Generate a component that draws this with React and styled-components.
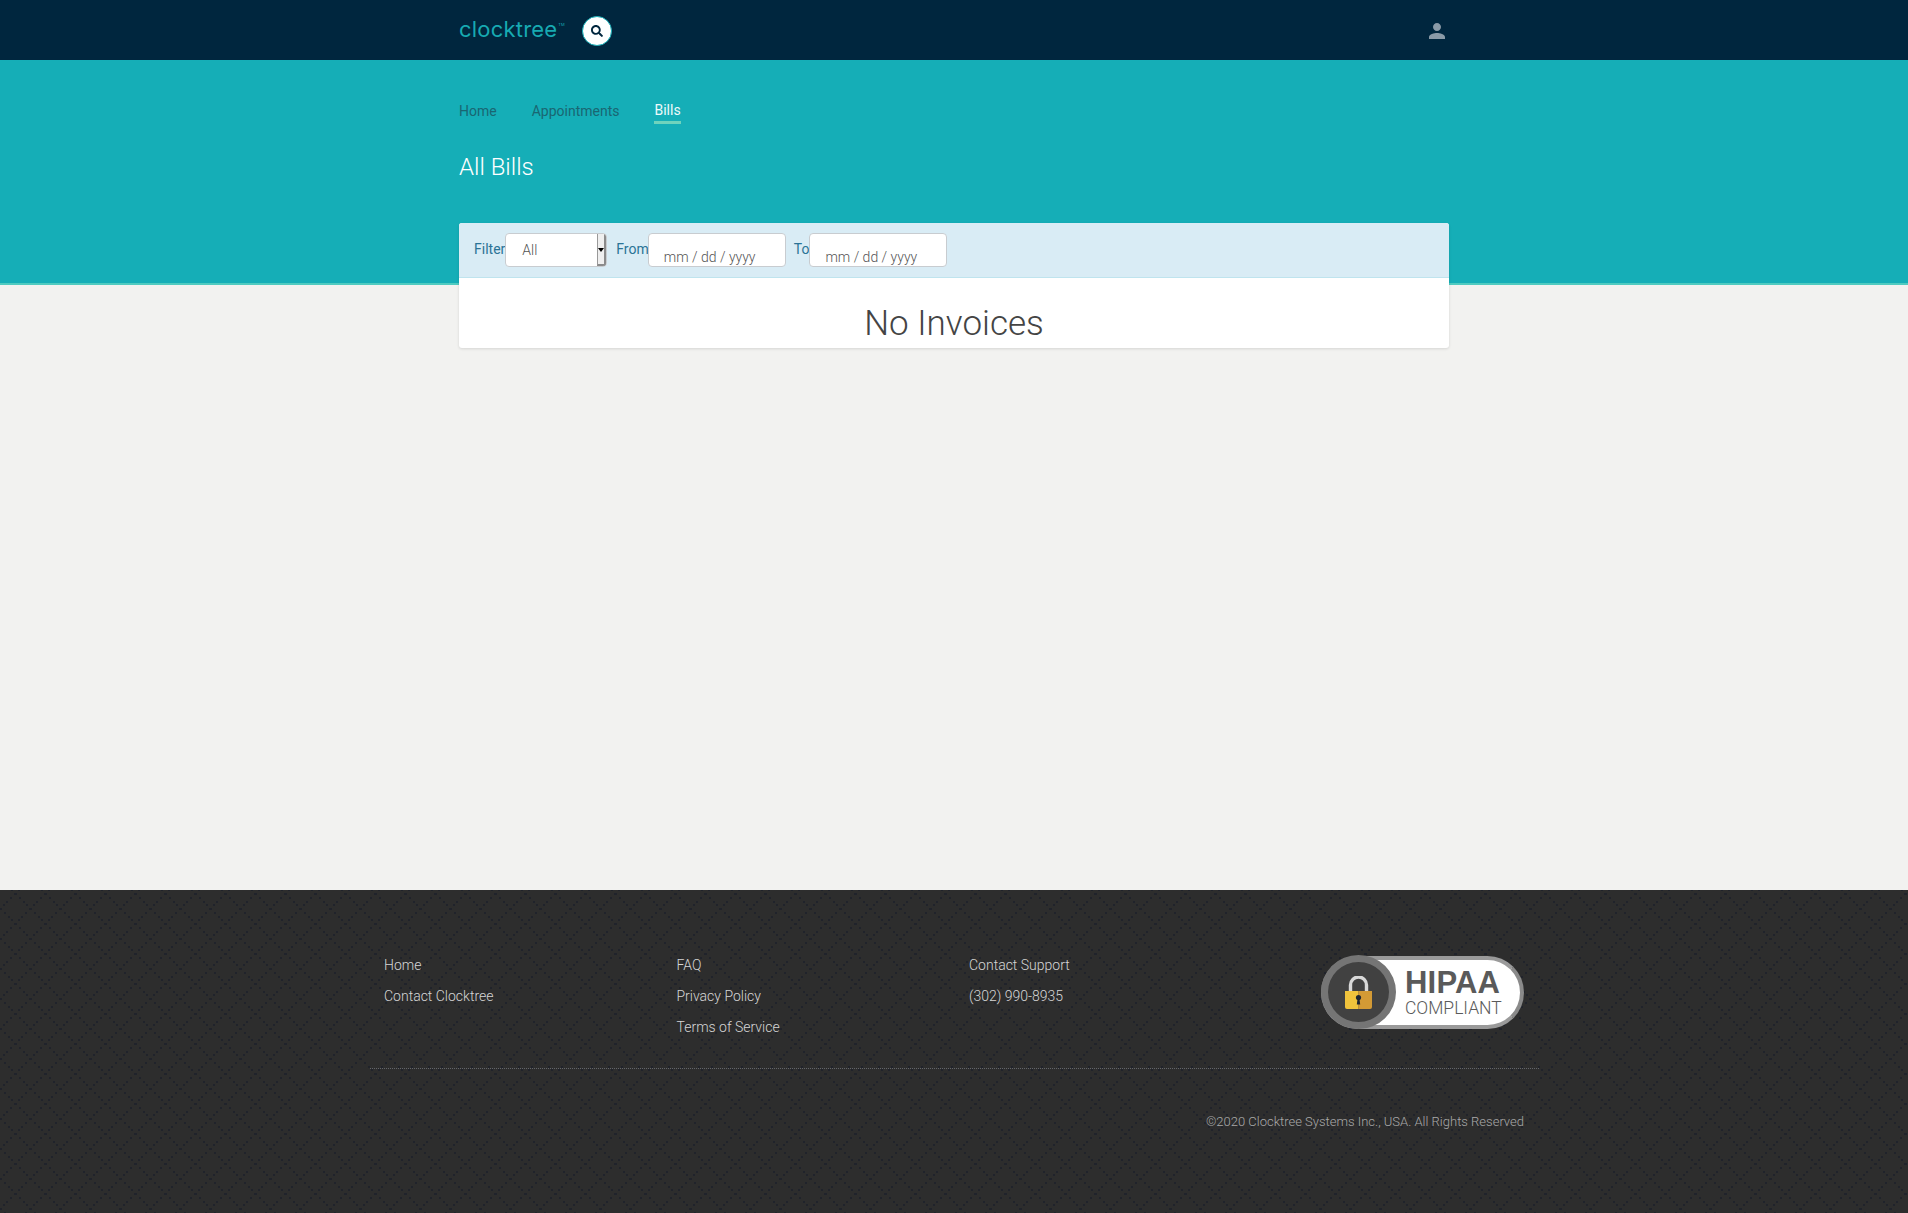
import React from 'react'
import styled, { createGlobalStyle } from 'styled-components'
import { MdPerson } from 'react-icons/md'
import { FaSearch } from 'react-icons/fa'

// footer lattice: small square dots on two diagonals, 8 dots to a 30px tile
const dots = Array.from({ length: 8 }, (_, i) => Math.round(i * 3.75))
  .map(n => `<rect x="${n}" y="${n}" width="2" height="2"/><rect x="${29 - n}" y="${n}" width="2" height="2"/>`)
  .join('')
const tile = encodeURIComponent(`<svg xmlns="http://www.w3.org/2000/svg" width="30" height="30" fill="#20232b" shape-rendering="crispEdges">${dots}</svg>`)

const GlobalStyle = createGlobalStyle`
  html, body {
    margin: 0;
    padding: 0;
    background: #f2f2f0;
    font-family: Roboto, "Liberation Sans", sans-serif;
  }
  * {
    box-sizing: border-box;
  }
`

const Page = styled.div`
  width: 100%;
  height: 1213px;
  display: flex;
  flex-direction: column;
  overflow: hidden;
`

const TopBar = styled.header`
  height: 60px;
  flex: none;
  background: #00263e;
`

const Wrap = styled.div`
  width: 990px;
  margin: 0 auto;
`

const TopInner = styled(Wrap)`
  height: 100%;
  display: flex;
  align-items: center;
  justify-content: space-between;
`

const Brand = styled.div`
  display: flex;
  align-items: center;
  gap: 20px;
`

const Logo = styled.span`
  display: flex;
  align-items: flex-start;
  width: 103px;
  color: #17aab2;
  font-family: Inter, sans-serif;
  font-size: 22px;
  line-height: 28px;
  letter-spacing: 0.2px;
  margin-top: -3px;

  sup {
    font-size: 4px;
    line-height: 4px;
    letter-spacing: 0;
    margin: 8px 0 0 1px;
  }
`

const SearchButton = styled.button`
  width: 30px;
  height: 30px;
  margin-top: 1px;
  padding: 0;
  border: 1px solid #15aeb7;
  border-radius: 50%;
  background: #fff;
  color: #00263e;
  display: flex;
  align-items: center;
  justify-content: center;
  font-size: 12px;
`

const UserIcon = styled.span`
  display: flex;
  color: #8a9aa7;
  font-size: 24px;
  margin-top: 2px;
`

const Hero = styled.section`
  height: 225px;
  flex: none;
  background: #15aeb7;
  border-bottom: 2px solid #4fcbc0;
  padding-top: 38px;
`

const Tabs = styled.nav`
  display: flex;
  gap: 35px;
  height: 27px;
`

const Tab = styled.a`
  font-size: 14px;
  line-height: ${p => (p.$active ? 24 : 26)}px;
  height: 26px;
  color: ${p => (p.$active ? '#eefafa' : '#1a6672')};
  border-bottom: ${p => (p.$active ? '3px solid #6fd3bd' : 'none')};
`

const Title = styled.h1`
  margin: 26px 0 0;
  font-size: 24px;
  line-height: 32px;
  font-weight: 300;
  color: #fff;
`

const Main = styled.main`
  flex: 1;
  position: relative;
`

const Panel = styled(Wrap)`
  margin-top: -62px;
  background: #fff;
  border-radius: 3px;
  box-shadow: 0 1px 3px rgba(0, 0, 0, 0.12);
  overflow: hidden;
`

const FilterBar = styled.div`
  height: 55px;
  background: #d9ecf5;
  border-bottom: 1px solid #bfe4ee;
  padding: 10px 15px 0;
  display: flex;
  align-items: flex-start;
`

const FilterLabel = styled.label`
  font-size: 14px;
  line-height: 32px;
  color: #2b7396;
  margin-left: ${p => p.$gap || 0}px;
  margin-right: ${p => p.$pull || 0}px;
`

const Field = styled.div`
  width: ${p => p.$width}px;
  height: 34px;
  background: #fff;
  border: 1px solid #c8ccd0;
  border-radius: 4px;
  font-size: 14px;
  font-weight: 300;
  color: #555;
  padding: ${p => p.$top}px 0 0 ${p => p.$left}px;
  line-height: 20px;
  position: relative;
  overflow: hidden;
`

const Spinner = styled.span`
  position: absolute;
  top: 0;
  right: 0;
  bottom: 0;
  width: 9px;
  background: #efefef;
  border-left: 1px solid #999;
  border-right: 2px solid #8b8b8b;
  border-bottom: 2px solid #8b8b8b;

  &::after {
    content: '';
    position: absolute;
    top: 14px;
    left: 0;
    border: 3px solid transparent;
    border-top: 4px solid #000;
  }
`

const Empty = styled.h2`
  margin: 0;
  height: 70px;
  text-align: center;
  font-size: 35px;
  line-height: 44px;
  padding-top: 24px;
  font-weight: 300;
  color: #444;
`

const Footer = styled.footer`
  height: 323px;
  flex: none;
  background-color: #2d2d2d;
  background-image: url("data:image/svg+xml,${tile}");
  background-position: 0 -12px;
  padding-top: 60px;
`

const FooterInner = styled.div`
  width: 1169px;
  margin-left: 370px;
`

const FooterTop = styled.div`
  height: 119px;
  padding: 0 15px 0 14px;
  border-bottom: 1px dotted #63656a;
  display: flex;
  justify-content: space-between;
`

const Columns = styled.div`
  display: grid;
  grid-template-columns: repeat(3, 292.5px);
`

const FootLink = styled.a`
  display: block;
  color: #d6d6d6;
  font-size: 14px;
  font-weight: 300;
  line-height: 31px;
`

const Badge = styled.div`
  width: 203px;
  height: 73px;
  margin-top: 6px;
  position: relative;
  display: flex;
  align-items: center;
  background: #fff;
  border-radius: 37px;
  border: 4px solid #9a9a9a;
  border-right-color: #8a8a8a;
  padding-left: 80px;
`

const BadgeRing = styled.div`
  position: absolute;
  left: -4px;
  top: -5px;
  width: 75px;
  height: 74px;
  border-radius: 50%;
  background: #414141;
  border: 7px solid #757575;
  display: flex;
  align-items: center;
  justify-content: center;
`

const BadgeText = styled.div`
  color: #5a5a5a;
  margin-top: -3px;

  b {
    display: block;
    font-family: "Liberation Sans", sans-serif;
    font-size: 31px;
    line-height: 34px;
    letter-spacing: 0.2px;
  }

  span {
    display: block;
    font-size: 17.5px;
    font-weight: 300;
    line-height: 17px;
  }
`

const Copyright = styled.p`
  margin: 44px 0 0;
  padding-right: 15px;
  text-align: right;
  font-size: 13px;
  font-weight: 300;
  line-height: 18px;
  color: #a9a9a9;
`

const Lock = () => (
  <svg width="27" height="33" viewBox="0 0 27 33">
    <path d="M5.5 16V9a8 8 0 0 1 16 0v7" fill="none" stroke="#d8d8d8" strokeWidth="3.4" />
    <path d="M0 15h13.5v18H2a2 2 0 0 1-2-2z" fill="#f0c33c" />
    <path d="M13.5 15H27v16a2 2 0 0 1-2 2H13.5z" fill="#d39a35" />
    <circle cx="13.5" cy="21.5" r="2.6" fill="#1d2530" />
    <path d="M12.6 22h1.8l.8 6.5h-3.4z" fill="#1d2530" />
  </svg>
)

export default function App() {
  return (
    <Page>
      <GlobalStyle />
      <TopBar>
        <TopInner>
          <Brand>
            <Logo>clocktree<sup>TM</sup></Logo>
            <SearchButton><FaSearch /></SearchButton>
          </Brand>
          <UserIcon><MdPerson /></UserIcon>
        </TopInner>
      </TopBar>
      <Hero>
        <Wrap>
          <Tabs>
            <Tab>Home</Tab>
            <Tab>Appointments</Tab>
            <Tab $active>Bills</Tab>
          </Tabs>
          <Title>All Bills</Title>
        </Wrap>
      </Hero>
      <Main>
        <Panel>
          <FilterBar>
            <FilterLabel>Filter</FilterLabel>
            <Field $width={102} $top={6} $left={16}>All<Spinner /></Field>
            <FilterLabel $gap={9} $pull={-1}>From</FilterLabel>
            <Field $width={138} $top={13} $left={15}>mm / dd / yyyy</Field>
            <FilterLabel $gap={8}>To</FilterLabel>
            <Field $width={138} $top={13} $left={15}>mm / dd / yyyy</Field>
          </FilterBar>
          <Empty>No Invoices</Empty>
        </Panel>
      </Main>
      <Footer>
        <FooterInner>
          <FooterTop>
            <Columns>
              <div>
                <FootLink>Home</FootLink>
                <FootLink>Contact Clocktree</FootLink>
              </div>
              <div>
                <FootLink>FAQ</FootLink>
                <FootLink>Privacy Policy</FootLink>
                <FootLink>Terms of Service</FootLink>
              </div>
              <div>
                <FootLink>Contact Support</FootLink>
                <FootLink>(302) 990-8935</FootLink>
              </div>
            </Columns>
            <Badge>
              <BadgeRing><Lock /></BadgeRing>
              <BadgeText>
                <b>HIPAA</b>
                <span>COMPLIANT</span>
              </BadgeText>
            </Badge>
          </FooterTop>
          <Copyright>©2020 Clocktree Systems Inc., USA. All Rights Reserved</Copyright>
        </FooterInner>
      </Footer>
    </Page>
  )
}
